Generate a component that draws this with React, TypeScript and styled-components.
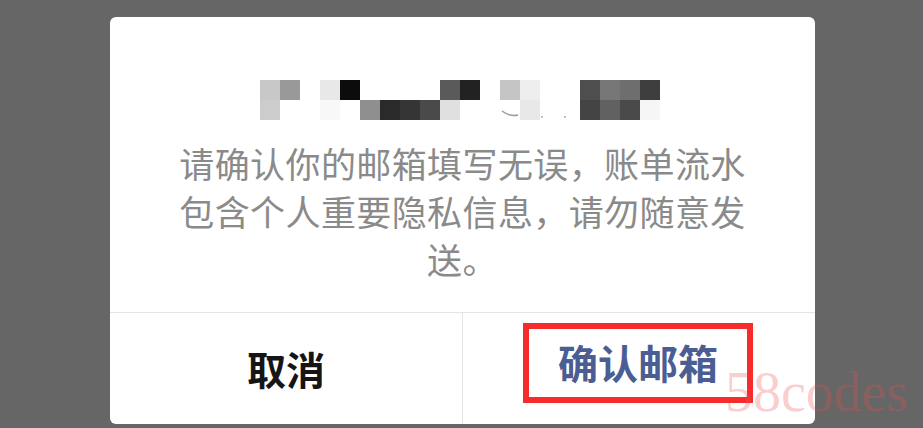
import styled, { createGlobalStyle } from "styled-components";

const GlobalStyle = createGlobalStyle`
    html, body {
        margin: 0;
        padding: 0;
        background-color: #666666;
    }
    body {
        font-family: "Noto Sans CJK SC", "Noto Sans", sans-serif;
    }
`;

const StyledPage = styled.div`
    position: relative;
    width: 923px;
    height: 428px;
    padding: 17px 0 0 110px;
    box-sizing: border-box;
    overflow: hidden;
`;

const StyledDialog = styled.div`
    width: 705px;
    height: 407px;
    background-color: #ffffff;
    border-radius: 6px;
    display: flex;
    flex-direction: column;
    overflow: hidden;
`;

const StyledBody = styled.div`
    padding: 63px 0 0 0;
    height: 295px;
    box-sizing: border-box;
    display: flex;
    flex-direction: column;
`;

const StyledMosaicRow = styled.div`
    display: flex;
    padding-left: 150px;
    height: 40px;
`;

const StyledMessage = styled.p`
    margin: 19px 0 0 0;
    padding: 0 66px;
    font-size: 35px;
    line-height: 48px;
    color: #8a8a8a;
    text-align: center;
    letter-spacing: 0.4px;
`;

const StyledActions = styled.div`
    flex: 1;
    display: flex;
    border-top: 1px solid #e4e4e4;
`;

const StyledAction = styled.div<{ $divider?: boolean }>`
    flex: 1;
    display: flex;
    align-items: center;
    justify-content: center;
    border-left: ${(props) => (props.$divider ? "1px solid #e4e4e4" : "none")};
`;

const StyledActionText = styled.span<{ $primary?: boolean }>`
    font-size: ${(props) => (props.$primary ? "40px" : "39px")};
    font-weight: 700;
    line-height: 1;
    color: ${(props) => (props.$primary ? "#4b5e93" : "#151515")};
`;

const StyledHighlight = styled.div`
    width: 230px;
    height: 80px;
    box-sizing: border-box;
    border: 6px solid #f62b2b;
    display: flex;
    align-items: center;
    justify-content: center;
    margin: -11px 0 0 -2px;
    padding-bottom: 2px;
`;

const StyledWatermark = styled.div`
    position: absolute;
    left: 725px;
    top: 364px;
    font-family: "Liberation Serif", serif;
    font-size: 56px;
    line-height: 1;
    color: rgba(232, 80, 80, 0.28);
    pointer-events: none;
`;

const cells: [number, number, string][] = [
    [0, 0, "#c8c8c8"], [20, 0, "#999999"], [60, 0, "#e8e8e8"], [80, 0, "#0c0c0c"],
    [180, 0, "#5a5a5a"], [200, 0, "#222222"], [240, 0, "#c5c5c5"], [260, 0, "#eeeeee"],
    [320, 0, "#4e4e4e"], [340, 0, "#777777"], [360, 0, "#6e6e6e"], [380, 0, "#3e3e3e"],
    [0, 20, "#cccccc"], [60, 20, "#f8f8f8"], [100, 20, "#8f8f8f"], [120, 20, "#2a2a2a"],
    [140, 20, "#353535"], [160, 20, "#4a4a4a"], [180, 20, "#e0e0e0"], [260, 20, "#e8e8e8"],
    [320, 20, "#444444"], [340, 20, "#616161"], [360, 20, "#4a4a4a"], [380, 20, "#f6f6f6"],
];

function Mosaic() {
    return (
        <svg width="400" height="40" viewBox="0 0 400 40">
            {cells.map(([x, y, c]) => (
                <rect key={`${x}-${y}`} x={x} y={y} width="20" height="20" fill={c} />
            ))}
            <path d="M 242 31 Q 250 37 258 35" stroke="#9a9a9a" strokeWidth="1.5" fill="none" />
            <circle cx="282" cy="37" r="1" fill="#aaaaaa" />
            <circle cx="305" cy="37" r="1" fill="#aaaaaa" />
        </svg>
    );
}

export default function App() {
    return (
        <>
            <GlobalStyle />
            <StyledPage>
                <StyledDialog>
                    <StyledBody>
                        <StyledMosaicRow>
                            <Mosaic />
                        </StyledMosaicRow>
                        <StyledMessage>
                            请确认你的邮箱填写无误，账单流水包含个人重要隐私信息，请勿随意发送。
                        </StyledMessage>
                    </StyledBody>
                    <StyledActions>
                        <StyledAction>
                            <StyledActionText>取消</StyledActionText>
                        </StyledAction>
                        <StyledAction $divider>
                            <StyledHighlight>
                                <StyledActionText $primary>确认邮箱</StyledActionText>
                            </StyledHighlight>
                        </StyledAction>
                    </StyledActions>
                </StyledDialog>
                <StyledWatermark>58codes</StyledWatermark>
            </StyledPage>
        </>
    );
}
